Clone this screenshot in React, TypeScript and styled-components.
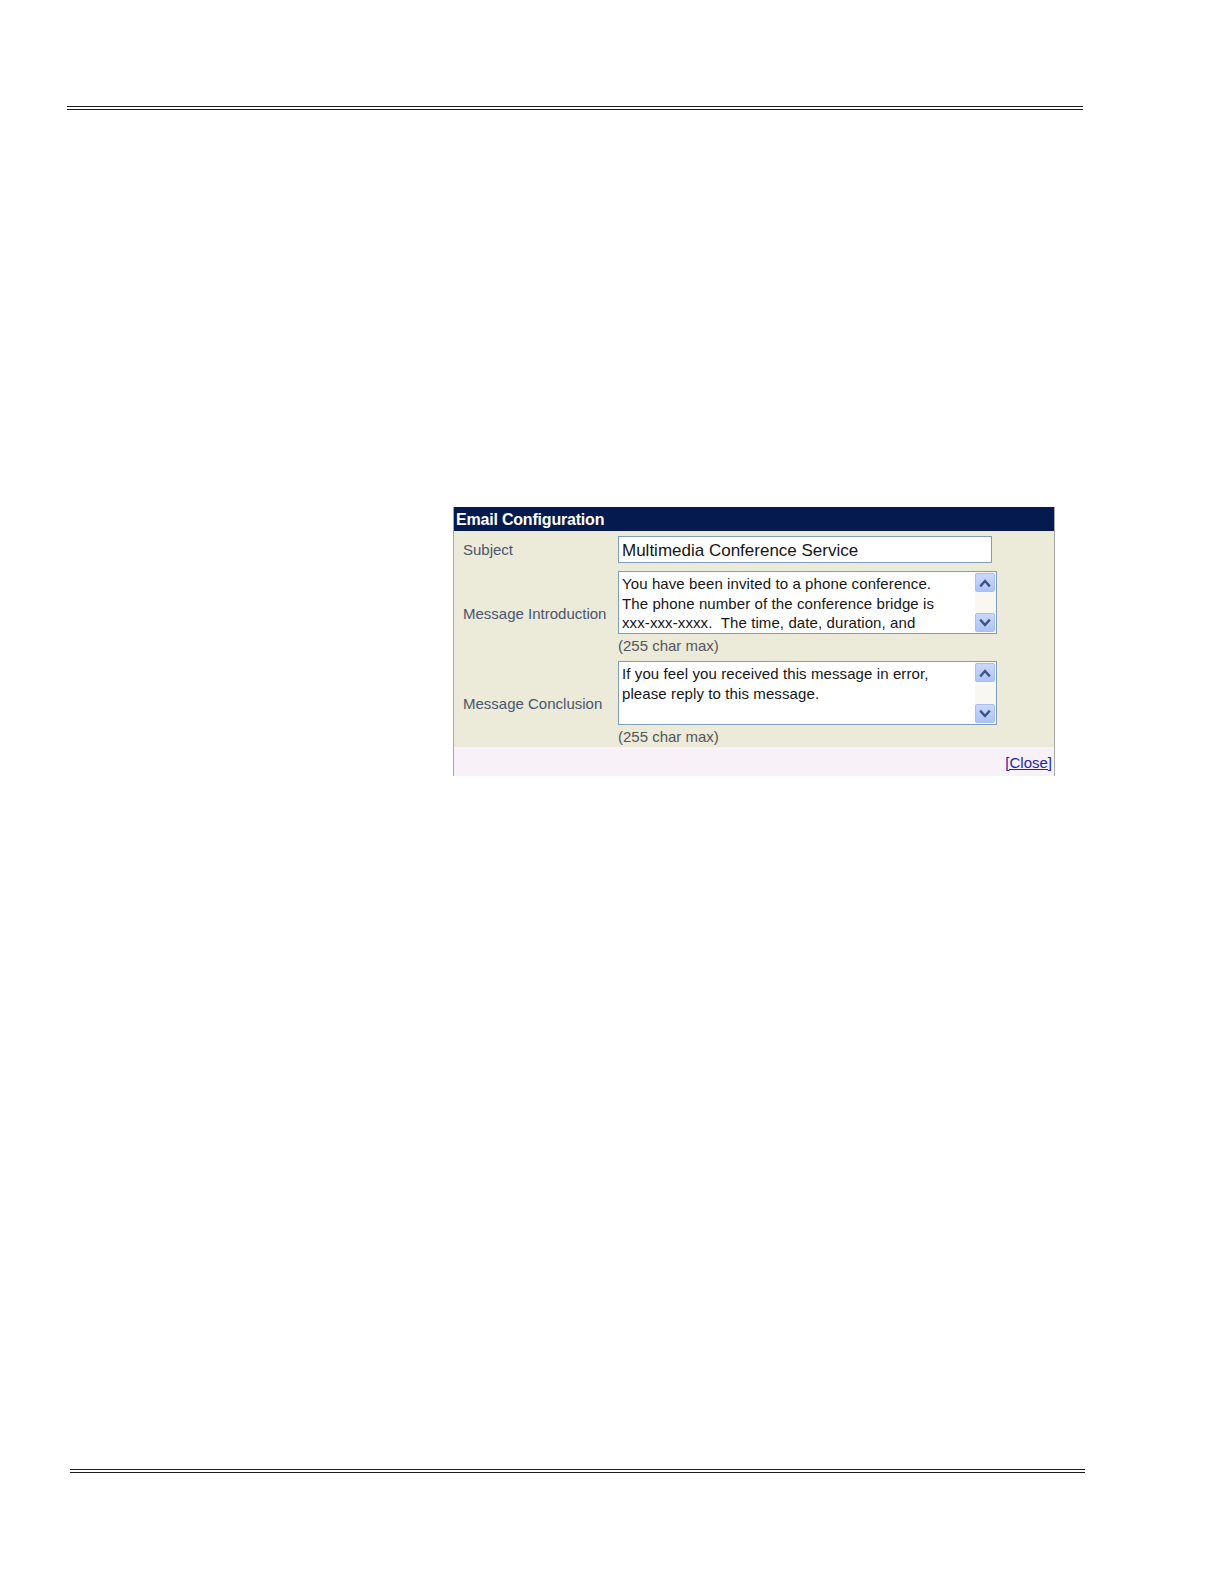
import React from 'react';
import styled, { createGlobalStyle } from 'styled-components';

const GlobalStyle = createGlobalStyle`
  html, body {
    margin: 0;
    padding: 0;
    background: #ffffff;
  }
  body {
    font-family: 'Liberation Sans', Arial, sans-serif;
  }
`;

const Page = styled.div`
  width: 1224px;
  height: 1584px;
  padding-top: 106px;
  box-sizing: border-box;
  display: flex;
  flex-direction: column;
`;

const Rule = styled.div<{ $left: number; $width: number }>`
  margin-left: ${(p) => p.$left}px;
  width: ${(p) => p.$width}px;
  height: 2px;
  border-top: 1px solid #1c1c1c;
  border-bottom: 1px solid #1c1c1c;
`;

const Content = styled.div`
  height: 1359px;
  box-sizing: border-box;
  padding: 397px 0 0 453px;
`;

const Dialog = styled.div`
  width: 602px;
  box-sizing: border-box;
  border-left: 1px solid #a7a7a3;
  border-right: 1px solid #a7a7a3;
`;

const Header = styled.div`
  height: 24px;
  line-height: 26px;
  padding-left: 2px;
  background: #051a4e;
  color: #ffffff;
  font-size: 16px;
  font-weight: 700;
  letter-spacing: -0.2px;
`;

const Body = styled.div`
  background: #ecead9;
  padding: 5px 0 1px 9px;
  display: flex;
  flex-direction: column;
`;

const Row = styled.div<{ $gap: number }>`
  display: grid;
  grid-template-columns: 155px 379px;
  align-items: center;
  margin-top: ${(p) => p.$gap}px;
`;

const Label = styled.div`
  font-size: 15px;
  color: #4a5570;
  white-space: nowrap;
`;

const TextInput = styled.div`
  width: 374px;
  height: 27px;
  box-sizing: border-box;
  border: 1px solid #7f9db9;
  background: #ffffff;
  padding: 1px 3px 0;
  font-size: 17px;
  line-height: 25px;
  color: #161616;
  white-space: nowrap;
  overflow: hidden;
`;

const FieldStack = styled.div`
  display: flex;
  flex-direction: column;
`;

const TextBox = styled.div<{ $height: number }>`
  height: ${(p) => p.$height}px;
  box-sizing: border-box;
  border: 1px solid #7f9db9;
  background: #ffffff;
  display: flex;
`;

const TextContent = styled.div`
  flex: 1;
  padding: 2px 3px 0;
  font-size: 15px;
  line-height: 19.5px;
  letter-spacing: 0.1px;
  color: #161616;
  white-space: pre;
  overflow: hidden;
`;

const Scrollbar = styled.div`
  width: 21px;
  box-sizing: border-box;
  padding: 1px 1px 1px 0;
  background: #f8f7f1;
  display: flex;
  flex-direction: column;
  justify-content: space-between;
`;

const ArrowButton = styled.div`
  height: 19px;
  box-sizing: border-box;
  border: 1px solid #a9bff0;
  border-radius: 2px;
  background: linear-gradient(#c9d8fd, #aec4f6);
  display: flex;
  align-items: center;
  justify-content: center;
`;

const Hint = styled.div`
  margin-top: 3px;
  font-size: 15px;
  line-height: 18px;
  color: #55565a;
`;

const Footer = styled.div`
  height: 29px;
  background: #f8f1f7;
  display: flex;
  align-items: center;
  justify-content: flex-end;
  padding-right: 2px;
  padding-top: 1px;
  box-sizing: border-box;
`;

const CloseLink = styled.a`
  font-size: 15px;
  color: #2424a8;
  text-decoration: underline;
`;

const Chevron = ({ up }: { up?: boolean }) => (
  <svg width="12" height="10" viewBox="0 0 12 10">
    <polyline
      points={up ? '2,7.5 6,3 10,7.5' : '2,2.5 6,7 10,2.5'}
      fill="none"
      stroke="#3f5282"
      strokeWidth="2.4"
      strokeLinecap="square"
    />
  </svg>
);

const ScrollText = ({ height, lines }: { height: number; lines: string[] }) => (
  <TextBox $height={height}>
    <TextContent>{lines.join('\n')}</TextContent>
    <Scrollbar>
      <ArrowButton>
        <Chevron up />
      </ArrowButton>
      <ArrowButton>
        <Chevron />
      </ArrowButton>
    </Scrollbar>
  </TextBox>
);

const App = () => {
  return (
    <>
      <GlobalStyle />
      <Page>
        <Rule $left={67} $width={1016} />
        <Content>
          <Dialog>
            <Header>Email Configuration</Header>
            <Body>
              <Row $gap={0}>
                <Label>Subject</Label>
                <TextInput>Multimedia Conference Service</TextInput>
              </Row>
              <Row $gap={8}>
                <Label>Message Introduction</Label>
                <FieldStack>
                  <ScrollText
                    height={63}
                    lines={[
                      'You have been invited to a phone conference.',
                      'The phone number of the conference bridge is',
                      'xxx-xxx-xxxx.  The time, date, duration, and',
                    ]}
                  />
                  <Hint>(255 char max)</Hint>
                </FieldStack>
              </Row>
              <Row $gap={6}>
                <Label>Message Conclusion</Label>
                <FieldStack>
                  <ScrollText
                    height={64}
                    lines={['If you feel you received this message in error,', 'please reply to this message.']}
                  />
                  <Hint>(255 char max)</Hint>
                </FieldStack>
              </Row>
            </Body>
            <Footer>
              <CloseLink href="#">[Close]</CloseLink>
            </Footer>
          </Dialog>
        </Content>
        <Rule $left={70} $width={1015} />
      </Page>
    </>
  );
};

export default App;
